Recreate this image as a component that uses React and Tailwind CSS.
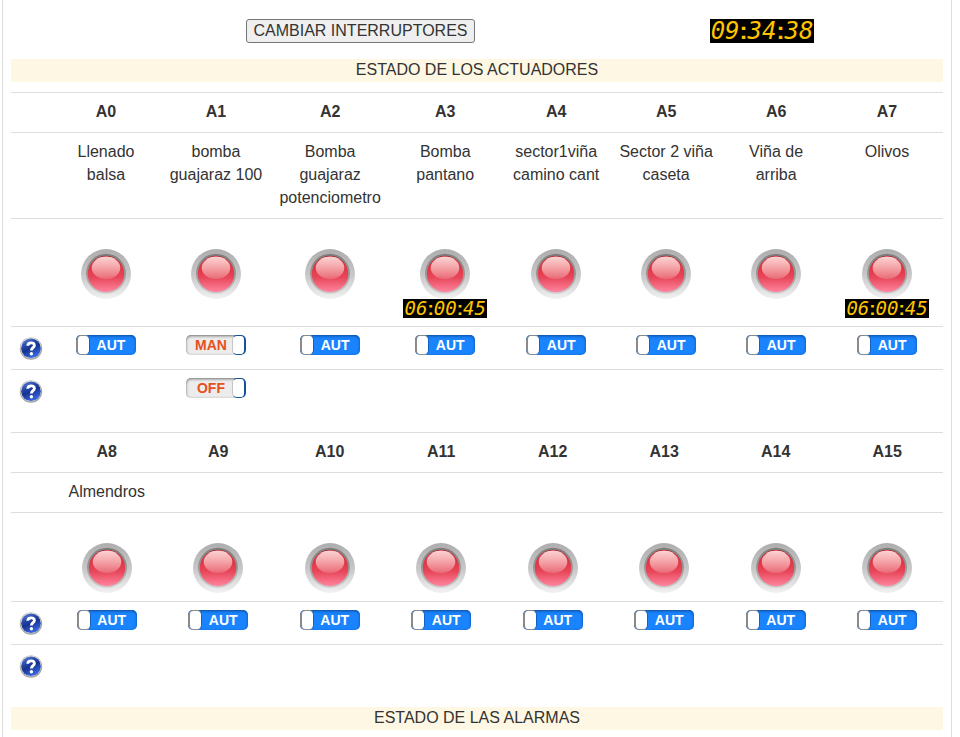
import { useState } from 'react'

const zone1 = [
  { id: 'A0', name: 'Llenado balsa', mode: 'AUT' },
  { id: 'A1', name: 'bomba guajaraz 100', mode: 'MAN', power: 'OFF' },
  { id: 'A2', name: 'Bomba guajaraz potenciometro', mode: 'AUT' },
  { id: 'A3', name: 'Bomba pantano', mode: 'AUT', timer: '06:00:45' },
  { id: 'A4', name: 'sector1viña camino cant', mode: 'AUT' },
  { id: 'A5', name: 'Sector 2 viña caseta', mode: 'AUT' },
  { id: 'A6', name: 'Viña de arriba', mode: 'AUT' },
  { id: 'A7', name: 'Olivos', mode: 'AUT', timer: '06:00:45' },
]

const zone2 = [
  { id: 'A8', name: 'Almendros', mode: 'AUT' },
  { id: 'A9', name: '', mode: 'AUT' },
  { id: 'A10', name: '', mode: 'AUT' },
  { id: 'A11', name: '', mode: 'AUT' },
  { id: 'A12', name: '', mode: 'AUT' },
  { id: 'A13', name: '', mode: 'AUT' },
  { id: 'A14', name: '', mode: 'AUT' },
  { id: 'A15', name: '', mode: 'AUT' },
]

const zone1Cols = ['w-[11.8%]', 'w-[11.8%]', 'w-[12.7%]', '', 'w-[11.8%]', 'w-[11.8%]', 'w-[11.8%]', '']

function Display({ value, large }) {
  const [h, m, s] = value.split(':')
  const size = large ? 'h-6 w-[104px] text-[24px]' : 'h-[19px] w-[84px] text-[19px]'
  const colon = "font-['Liberation_Sans',Arial,sans-serif] font-bold not-italic"
  return (
    <time
      className={`flex items-center justify-center bg-black font-['DejaVu_Sans_Mono',monospace] italic leading-none text-[#ffc400] ${size}`}
    >
      <span>{h}</span>
      <span className={colon}>:</span>
      <span>{m}</span>
      <span className={colon}>:</span>
      <span>{s}</span>
    </time>
  )
}

function Led() {
  return (
    <svg viewBox="0 0 50 50" className="mx-auto block size-[50px]" aria-hidden="true">
      <defs>
        <linearGradient id="ledRim" x1="0" y1="0" x2="0" y2="1">
          <stop offset="0" stopColor="#adadad" />
          <stop offset="0.5" stopColor="#c6c6c6" />
          <stop offset="1" stopColor="#f2f2f2" />
        </linearGradient>
        <linearGradient id="ledBezel" x1="0" y1="0" x2="0" y2="1">
          <stop offset="0" stopColor="#7d7d7d" />
          <stop offset="0.5" stopColor="#979797" />
          <stop offset="1" stopColor="#cfcfcf" />
        </linearGradient>
        <linearGradient id="ledBody" x1="0" y1="0" x2="0" y2="1">
          <stop offset="0" stopColor="#a8161f" />
          <stop offset="0.15" stopColor="#d82a38" />
          <stop offset="0.6" stopColor="#e8475a" />
          <stop offset="1" stopColor="#ff86a0" />
        </linearGradient>
        <linearGradient id="ledGloss" x1="0" y1="0" x2="0" y2="1">
          <stop offset="0" stopColor="#fbd3d3" />
          <stop offset="0.5" stopColor="#f4a3a7" />
          <stop offset="1" stopColor="#e96a76" />
        </linearGradient>
      </defs>
      <circle cx="25" cy="25" r="25" fill="url(#ledRim)" />
      <circle cx="25" cy="24.8" r="20" fill="url(#ledBezel)" />
      <circle cx="25" cy="25" r="18.2" fill="url(#ledBody)" />
      <ellipse cx="25" cy="18.8" rx="14.3" ry="11.2" fill="url(#ledGloss)" />
    </svg>
  )
}

function HelpButton({ label }) {
  return (
    <button type="button" aria-label={label} className="mt-0.5 block size-6">
      <svg viewBox="0 0 24 24" className="size-6" aria-hidden="true">
        <defs>
          <linearGradient id="helpFill" x1="0" y1="0" x2="0.5" y2="1">
            <stop offset="0" stopColor="#6d8ee0" />
            <stop offset="0.4" stopColor="#2546a8" />
            <stop offset="0.6" stopColor="#16348f" />
            <stop offset="1" stopColor="#3566e0" />
          </linearGradient>
        </defs>
        <circle cx="12" cy="11.6" r="11.2" fill="#a3a3a3" />
        <circle cx="11.8" cy="10.8" r="10.4" fill="#dcdcdc" />
        <circle cx="12" cy="11.2" r="9.8" fill="url(#helpFill)" />
        <path
          d="M8.7 8.800c.1-1.900 1.500-2.900 3.400-2.900 2 0 3.300 1 3.300 2.500 0 2.300-3 2.300-3 5.100"
          fill="none"
          stroke="#fff"
          strokeWidth="2.8"
        />
        <circle cx="12.4" cy="16.800" r="1.7" fill="#fff" />
      </svg>
    </button>
  )
}

function Toggle({ initial, on, off, label }) {
  const [value, setValue] = useState(initial)
  const active = value === on
  return (
    <button
      type="button"
      role="switch"
      aria-checked={active}
      aria-label={`${label} ${value}`}
      onClick={() => setValue(active ? off : on)}
      className={`mx-auto flex h-5 w-[60px] items-stretch overflow-hidden rounded-[5px] text-[14px] font-bold leading-none ${
        active
          ? 'bg-[#1a84ff] text-white shadow-[inset_0_1px_3px_#0c4a94]'
          : 'flex-row-reverse bg-[#ececec] text-[#e8501c] shadow-[inset_0_1px_3px_#6e6e6e]'
      }`}
    >
      <span
        className={`w-[14px] rounded-[5px] border-y bg-white ${
          active
            ? 'border-l-2 border-[#8a8a8a] border-r border-r-[#1560b8]'
            : 'border-r-2 border-[#15519c] border-l border-l-[#c4c4c4]'
        }`}
      />
      <span className={`flex flex-1 items-center justify-center ${active ? 'pr-1' : 'pl-1'}`}>
        {value}
      </span>
    </button>
  )
}

function ActuatorTable({ actuators, cols = [] }) {
  const cell = 'border-t border-[#ddd] px-2 align-top'
  const textCell = `${cell} pt-[7px] pb-[9px]`
  return (
    <table className="mb-5 w-full table-fixed border-separate border-spacing-0 text-center">
      <colgroup>
        <col className="w-10" />
        {actuators.map((a, i) => (
          <col key={a.id} className={cols[i]} />
        ))}
      </colgroup>
      <thead>
        <tr>
          <td className={textCell} />
          {actuators.map((a) => (
            <th key={a.id} scope="col" className={`${textCell} font-bold`}>{a.id}</th>
          ))}
        </tr>
      </thead>
      <tbody>
        <tr>
          <td className={textCell} />
          {actuators.map((a) => (
            <td key={a.id} className={textCell}>{a.name}</td>
          ))}
        </tr>
        <tr>
          <td className={cell} />
          {actuators.map((a) => (
            <td key={a.id} className={`${cell} pt-[30px] pb-2`}>
              <Led />
              {a.timer && (
                <div className="flex justify-center">
                  <Display value={a.timer} />
                </div>
              )}
            </td>
          ))}
        </tr>
        <tr>
          <td className={`${cell} py-2`}>
            <HelpButton label="Ayuda modo" />
          </td>
          {actuators.map((a) => (
            <td key={a.id} className={`${cell} py-2`}>
              <Toggle initial={a.mode} on="AUT" off="MAN" label={a.id} />
            </td>
          ))}
        </tr>
        <tr>
          <td className={`${cell} py-2`}>
            <HelpButton label="Ayuda encendido" />
          </td>
          {actuators.map((a) => (
            <td key={a.id} className={`${cell} py-2`}>
              {a.power && <Toggle initial={a.power} on="ON" off="OFF" label={a.id} />}
            </td>
          ))}
        </tr>
      </tbody>
    </table>
  )
}

function SectionTitle({ children }) {
  return <h2 className="bg-[#fdf7e3] pb-px text-center leading-[22px]">{children}</h2>
}

function App() {
  return (
    <div className="mr-2 ml-0.5 min-h-screen border-x border-[#ddd] bg-white px-2 pt-[19px] font-['Liberation_Sans',Arial,sans-serif] text-base leading-[23px] text-[#333]">
      <header className="mb-4 grid grid-cols-4">
        <div className="col-span-3 flex justify-center">
          <button
            type="button"
            className="h-6 rounded-[3px] border border-[#767676] bg-[#efefef] px-[7px] leading-none"
          >
            CAMBIAR INTERRUPTORES
          </button>
        </div>
        <Display value="09:34:38" large />
      </header>

      <main>
        <SectionTitle>ESTADO DE LOS ACTUADORES</SectionTitle>
        <div className="mt-2.5">
          <ActuatorTable actuators={zone1} cols={zone1Cols} />
          <ActuatorTable actuators={zone2} />
        </div>
        <SectionTitle>ESTADO DE LAS ALARMAS</SectionTitle>
      </main>
    </div>
  )
}

export default App
